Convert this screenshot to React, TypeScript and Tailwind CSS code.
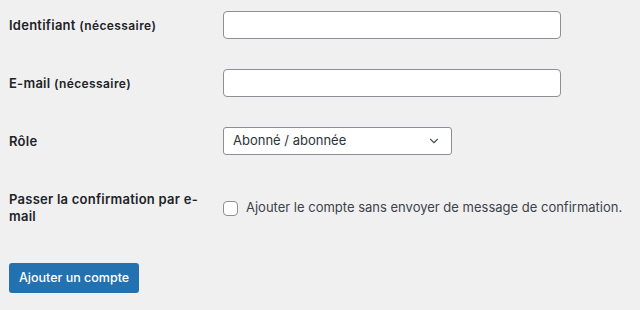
import React from "react";
import { ChevronDown } from "lucide-react";

const font = { fontFamily: "Inter, 'Noto Sans', sans-serif" };

function Row({ label, children, className = "" }: { label: React.ReactNode; children: React.ReactNode; className?: string }) {
  return (
    <div className={`flex items-center ${className}`}>
      <div className="w-[214px] shrink-0 pr-[14px] text-[13px] font-semibold tracking-[0.25px] leading-[17px] text-[#1d2327]">{label}</div>
      <div className="flex-1">{children}</div>
    </div>
  );
}

export default function App() {
  return (
    <div className="w-[640px] h-[310px] bg-[#f0f0f1] pl-[9px] pt-[11px]" style={font}>
      <Row label={<>Identifiant <span className="text-[12px] tracking-[0.4px]">(nécessaire)</span></>}>
        <input type="text" className="block w-[338px] h-[28px] bg-white border border-[#8c8f94] rounded-[4px]" />
      </Row>
      <Row className="mt-[30px]" label={<>E-mail <span className="text-[12px] tracking-[0.4px]">(nécessaire)</span></>}>
        <input type="text" className="block w-[338px] h-[28px] bg-white border border-[#8c8f94] rounded-[4px]" />
      </Row>
      <Row className="mt-[30px]" label="Rôle">
        <div className="flex items-center justify-between w-[229px] h-[28px] bg-white border border-[#8c8f94] rounded-[3px] pl-[9px] pr-[10px] text-[13px] text-[#2c3338]">
          <span>Abonné / abonnée</span>
          <ChevronDown className="w-[14px] h-[14px] text-[#50575e]" strokeWidth={2} />
        </div>
      </Row>
      <Row className="mt-[36px]" label="Passer la confirmation par e-mail">
        <label className="flex items-center gap-[8px] text-[13px] text-[#3c434a]">
          <span className="block w-[15px] h-[15px] bg-white border border-[#8c8f94] rounded-[4px]" />
          Ajouter le compte sans envoyer de message de confirmation.
        </label>
      </Row>
      <button className="mt-[38px] block h-[30px] px-[10px] bg-[#2271b1] text-white text-[12.5px] rounded-[3px] font-medium">
        Ajouter un compte
      </button>
    </div>
  );
}
